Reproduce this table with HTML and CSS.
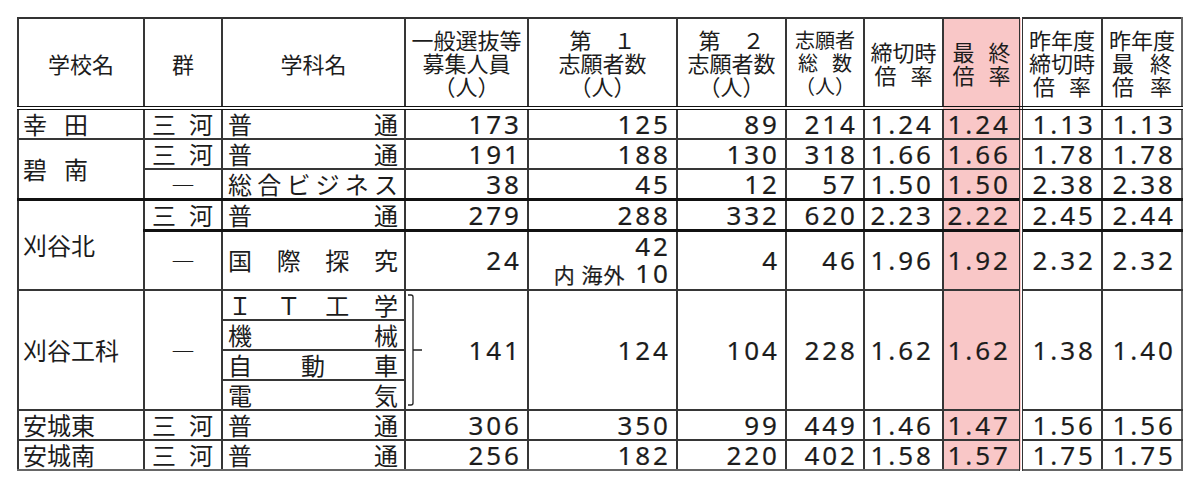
FILE: index.html
```html
<!DOCTYPE html>
<html lang="ja">
<head>
<meta charset="utf-8">
<title>志願者数</title>
<link rel="stylesheet" href="styles.css">
</head>
<body>
<table class="t">
  <colgroup>
    <col class="c-school"><col class="c-gun"><col class="c-dept"><col class="c-cap"><col class="c-f1"><col class="c-f2"><col class="c-tot"><col class="c-r1"><col class="c-r2"><col class="c-p1"><col class="c-p2">
  </colgroup>
  <thead>
    <tr class="r-head">
      <th>学校名</th>
      <th>群</th>
      <th>学科名</th>
      <th><span class="hl">一般選抜等</span><span class="hl">募集人員</span><span class="hl">（人）</span></th>
      <th><span class="hl">第　１</span><span class="hl">志願者数</span><span class="hl">（人）</span></th>
      <th><span class="hl">第　２</span><span class="hl">志願者数</span><span class="hl">（人）</span></th>
      <th class="h-small"><span class="hl">志願者</span><span class="hl sp w54"><span>総</span><span>数</span></span><span class="hl">（人）</span></th>
      <th><span class="hl">締切時</span><span class="hl sp w58"><span>倍</span><span>率</span></span></th>
      <th class="pk dbl"><span class="hl sp w58"><span>最</span><span>終</span></span><span class="hl sp w58"><span>倍</span><span>率</span></span></th>
      <th><span class="hl">昨年度</span><span class="hl">締切時</span><span class="hl sp w58"><span>倍</span><span>率</span></span></th>
      <th><span class="hl">昨年度</span><span class="hl sp w60"><span>最</span><span>終</span></span><span class="hl sp w60"><span>倍</span><span>率</span></span></th>
    </tr>
  </thead>
  <tbody>
    <tr class="r1">
      <td class="name"><span class="ls">幸田</span></td>
      <td class="gun"><span class="sp"><span>三</span><span>河</span></span></td>
      <td class="dept"><span class="sp"><span>普</span><span>通</span></span></td>
      <td class="n">173</td><td class="n">125</td><td class="n">89</td><td class="n">214</td>
      <td class="n n-r">1.24</td><td class="n n-r pk dbl">1.24</td><td class="n">1.13</td><td class="n">1.13</td>
    </tr>
    <tr class="r1">
      <td class="name" rowspan="2"><span class="ls">碧南</span></td>
      <td class="gun"><span class="sp"><span>三</span><span>河</span></span></td>
      <td class="dept"><span class="sp"><span>普</span><span>通</span></span></td>
      <td class="n">191</td><td class="n">188</td><td class="n">130</td><td class="n">318</td>
      <td class="n n-r">1.66</td><td class="n n-r pk dbl">1.66</td><td class="n">1.78</td><td class="n">1.78</td>
    </tr>
    <tr class="r1">
      <td class="gun dash">―</td>
      <td class="dept"><span class="sp"><span>総</span><span>合</span><span>ビ</span><span>ジ</span><span>ネ</span><span>ス</span></span></td>
      <td class="n">38</td><td class="n">45</td><td class="n">12</td><td class="n">57</td>
      <td class="n n-r">1.50</td><td class="n n-r pk dbl">1.50</td><td class="n">2.38</td><td class="n">2.38</td>
    </tr>
    <tr class="r1 thick">
      <td class="name" rowspan="2">刈谷北</td>
      <td class="gun"><span class="sp"><span>三</span><span>河</span></span></td>
      <td class="dept"><span class="sp"><span>普</span><span>通</span></span></td>
      <td class="n">279</td><td class="n">288</td><td class="n">332</td><td class="n">620</td>
      <td class="n n-r">2.23</td><td class="n n-r pk dbl">2.22</td><td class="n">2.45</td><td class="n">2.44</td>
    </tr>
    <tr class="r2 thick">
      <td class="gun dash">―</td>
      <td class="dept"><span class="sp"><span>国</span><span>際</span><span>探</span><span>究</span></span></td>
      <td class="n">24</td>
      <td class="n two"><span class="ln">42</span><span class="ln"><span class="jp">内 海外</span> 10</span></td>
      <td class="n">4</td><td class="n">46</td>
      <td class="n n-r">1.96</td><td class="n n-r pk dbl">1.92</td><td class="n">2.32</td><td class="n">2.32</td>
    </tr>
    <tr class="r4">
      <td class="name" rowspan="4">刈谷工科</td>
      <td class="gun dash" rowspan="4">―</td>
      <td class="dept"><span class="sp"><span>Ｉ</span><span>Ｔ</span><span>工</span><span>学</span></span></td>
      <td class="n brk" rowspan="4">
        <svg class="bracket" viewBox="0 0 16 112" width="16" height="112" aria-hidden="true">
          <path d="M0 1 H3 Q5 1 5 3 V56 H14 M5 56 V109 Q5 111 3 111 H0" fill="none" stroke="#222" stroke-width="1.3"/>
        </svg>141</td>
      <td class="n" rowspan="4">124</td><td class="n" rowspan="4">104</td><td class="n" rowspan="4">228</td>
      <td class="n n-r" rowspan="4">1.62</td><td class="n n-r pk dbl" rowspan="4">1.62</td><td class="n" rowspan="4">1.38</td><td class="n" rowspan="4">1.40</td>
    </tr>
    <tr class="r4">
      <td class="dept"><span class="sp"><span>機</span><span>械</span></span></td>
    </tr>
    <tr class="r4">
      <td class="dept"><span class="sp"><span>自</span><span>動</span><span>車</span></span></td>
    </tr>
    <tr class="r4">
      <td class="dept"><span class="sp"><span>電</span><span>気</span></span></td>
    </tr>
    <tr class="r1">
      <td class="name">安城東</td>
      <td class="gun"><span class="sp"><span>三</span><span>河</span></span></td>
      <td class="dept"><span class="sp"><span>普</span><span>通</span></span></td>
      <td class="n">306</td><td class="n">350</td><td class="n">99</td><td class="n">449</td>
      <td class="n n-r">1.46</td><td class="n n-r pk dbl">1.47</td><td class="n">1.56</td><td class="n">1.56</td>
    </tr>
    <tr class="r1">
      <td class="name">安城南</td>
      <td class="gun"><span class="sp"><span>三</span><span>河</span></span></td>
      <td class="dept"><span class="sp"><span>普</span><span>通</span></span></td>
      <td class="n">256</td><td class="n">182</td><td class="n">220</td><td class="n">402</td>
      <td class="n n-r">1.58</td><td class="n n-r pk dbl">1.57</td><td class="n">1.75</td><td class="n">1.75</td>
    </tr>
  </tbody>
</table>
</body>
</html>
```
FILE: styles.css
```css
html, body {
  margin: 0;
  padding: 0;
  background: #ffffff;
}

body {
  padding: 17px 0 0 17px;
  font-family: "Noto Sans CJK JP", "Noto Sans", sans-serif;
  color: #1c1c1c;
}

.t {
  border-collapse: collapse;
  table-layout: fixed;
  width: 1165px;
}

.c-school { width: 126px; }
.c-gun { width: 78px; }
.c-dept { width: 183px; }
.c-cap { width: 123px; }
.c-f1 { width: 149px; }
.c-f2 { width: 109px; }
.c-tot { width: 78px; }
.c-r1 { width: 79px; }
.c-r2 { width: 78px; }
.c-p1 { width: 81px; }
.c-p2 { width: 80px; }

.t th,
.t td {
  border: 2px solid #363636;
  padding: 0;
  vertical-align: middle;
}

.t th {
  font-weight: normal;
  font-size: 22px;
  line-height: 24px;
  text-align: center;
  border-bottom: 4px double #111;
  border-top-color: #333;
}

.hl {
  display: block;
  height: 23px;
  line-height: 23px;
}

.r-head { height: 90px; }
.r1 { height: 30px; }
.r2 { height: 59px; }
.r4 { height: 30px; }

.thick td { border-top: 3px solid #111; }

.h-small { font-size: 20px !important; }

.sp {
  display: flex;
  justify-content: space-between;
}

.w54 { width: 54px; margin: 0 auto; }
.w58 { width: 58px; margin: 0 auto; }
.w60 { width: 60px; margin: 0 auto; }

.pk { background: #f9c7c7; }
.dbl { border-right: 4px double #333 !important; }

.name {
  font-size: 24px;
  line-height: 28px;
  padding-left: 4px !important;
  white-space: nowrap;
}

.ls { letter-spacing: 17px; }

.gun {
  font-size: 24px;
  line-height: 28px;
}

.gun .sp { padding: 0 8px 0 7px; }

.dash { text-align: center; }

.dept {
  font-size: 24px;
  line-height: 28px;
}

.dept .sp { padding: 0 6px 0 5px; }

.n {
  font-family: "Noto Sans", "Noto Sans CJK JP", sans-serif;
  font-size: 26px;
  line-height: 28px;
  letter-spacing: 3px;
  text-align: right;
  padding-right: 5px !important;
  white-space: nowrap;
  -webkit-text-stroke: 0.2px #1c1c1c;
}

.n-r { padding-right: 8px !important; }

.two .ln {
  display: block;
  line-height: 27px;
}

.jp {
  font-family: "Noto Sans CJK JP", sans-serif;
  font-size: 21px;
  letter-spacing: 1px;
}

.brk { position: relative; }

.bracket {
  position: absolute;
  left: 2px;
  top: 3px;
}

.t tr > :last-child { border-right-color: #666; }
.t tbody tr:last-child td { border-bottom-color: #666; }
```
